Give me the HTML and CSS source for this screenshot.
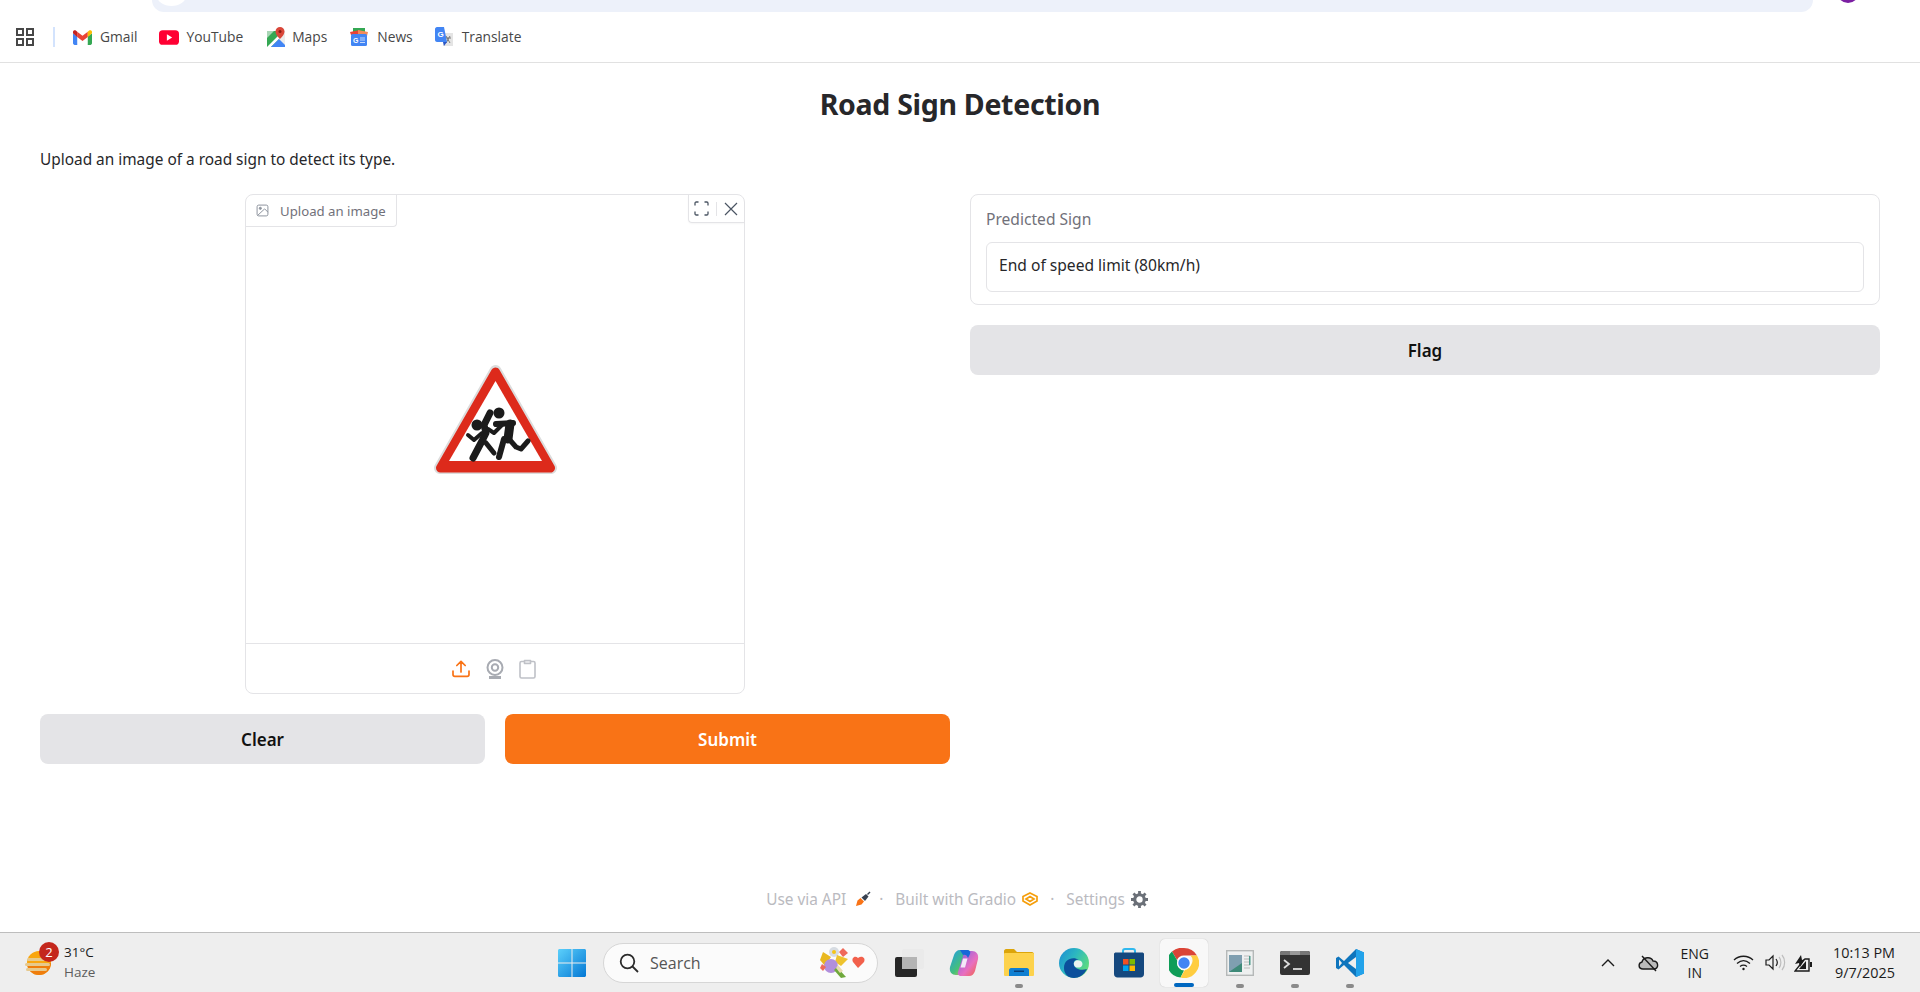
FILE: index.html
```html
<!DOCTYPE html>
<html lang="en">
<head>
<meta charset="utf-8">
<title>Road Sign Detection</title>
<link rel="stylesheet" href="styles.css">
</head>
<body>
<div class="screen">
  <div class="chrome-top">
    <div class="omnibox"><span class="omni-notch"></span></div>
    <span class="avatar"></span>
  </div>
  <nav class="bookmarks">
    <svg class="apps" width="18" height="18" viewBox="0 0 18 18"><g fill="none" stroke="#474747" stroke-width="2"><rect x="1" y="1" width="6" height="6"/><rect x="11" y="1" width="6" height="6"/><rect x="1" y="11" width="6" height="6"/><rect x="11" y="11" width="6" height="6"/></g></svg>
    <span class="bm-divider"></span>
    <a class="bm bm-gmail"><svg width="19" height="15" viewBox="0 0 18 14"><path d="M0 3v9.500C0 13.300.7 14 1.500 14H4V6z" fill="#4285f4"/><path d="M14 6v8h2.500c.8 0 1.500-.7 1.500-1.500V3z" fill="#34a853"/><path d="M4 6.500V1.500L9 5.300l5-3.800v5L9 10.300z" fill="#ea4335"/><path d="M0 3V1.700C0 .3 1.600-.4 2.700.4L4 1.500v5z" fill="#c5221f"/><path d="M14 1.500 15.300.4C16.400-.4 18 .3 18 1.700V3l-4 3.500z" fill="#fbbc04"/></svg><span>Gmail</span></a>
    <a class="bm bm-yt"><svg width="20" height="15" viewBox="0 0 19 14"><rect width="19" height="14" rx="3.500" fill="#ff0033"/><path d="M7.500 4v6l5-3z" fill="#fff"/></svg><span>YouTube</span></a>
    <a class="bm bm-maps"><svg width="18" height="20" viewBox="0 0 18 20"><rect y="4" width="12" height="16" fill="#34a853"/><path d="M0 4h7L0 11z" fill="#a8d5b5"/><path d="M12 4h6v16h-6z" fill="#ececec"/><path d="M0 20 12 8v4l-8 8z" fill="#fff"/><path d="M4 20 12 12l6 6v2z" fill="#4285f4"/><path d="M13 0a4.500 4.500 0 0 0-4.500 4.500C8.500 8 13 12 13 12s4.500-4 4.500-7.500A4.500 4.500 0 0 0 13 0z" fill="#d9473a"/><circle cx="13" cy="4.500" r="1.500" fill="#8a1c14"/></svg><span>Maps</span></a>
    <a class="bm bm-news"><svg width="18" height="18" viewBox="0 0 18 18"><path d="M3 0h12v5H3z" fill="#34a853"/><path d="M0 4l10-2 1 5H1z" fill="#ea4335"/><path d="M8 2l10 2-1 4H8z" fill="#f28b5a"/><rect x="1" y="6" width="16" height="12" rx="1.500" fill="#4285f4"/><text class="news-g" x="3" y="14.500">G</text><path d="M10 10h5M10 12h5M10 14.500h5" stroke="#c5d9fb" stroke-width="1.200"/></svg><span>News</span></a>
    <a class="bm bm-translate"><svg width="18" height="20" viewBox="0 0 18 20"><path d="M8 6h10v13H8z" fill="#e4e4e4"/><path d="M11 9l4 7M15 9l-4 7M10 11h6" stroke="#777" stroke-width="1" fill="none"/><path d="M2 0h7l3 15H2c-1 0-2-1-2-2V2C0 1 1 0 2 0z" fill="#4285f4"/><path d="M8 15h4l-3 4z" fill="#2a56c6"/><text class="tr-g" x="2.500" y="10">G</text></svg><span>Translate</span></a>
  </nav>

  <main class="app">
    <h1 class="title">Road Sign Detection</h1>
    <p class="lead">Upload an image of a road sign to detect its type.</p>
    <div class="columns">
      <section class="col">
        <div class="image-slot">
          <div class="image-box">
            <div class="image-head">
              <div class="image-label">
                <svg width="13" height="13" viewBox="0 0 24 24" fill="none" stroke="#8c929c" stroke-width="1.800"><rect x="2" y="2" width="20" height="20" rx="3"/><circle cx="8" cy="8" r="2" fill="#8c929c"/><path d="M22 15l-6-6L3 21"/></svg>
                <span>Upload an image</span>
              </div>
              <div class="image-actions">
                <svg width="15" height="15" viewBox="0 0 15 15" fill="none" stroke="#4b5563" stroke-width="1.300"><path d="M1 4.500V2.200C1 1.500 1.500 1 2.200 1h2.300M10.500 1h2.300c.7 0 1.200.5 1.200 1.200v2.300M14 10.500v2.300c0 .7-.5 1.200-1.200 1.200h-2.300M4.500 14H2.200C1.500 14 1 13.500 1 12.800v-2.300"/></svg>
                <span class="action-sep"></span>
                <svg width="14" height="14" viewBox="0 0 14 14" fill="none" stroke="#4b5563" stroke-width="1.200"><path d="M1 1l12 12M13 1 1 13"/></svg>
              </div>
            </div>
            <div class="image-stage">
              <svg width="127" height="114" viewBox="0 0 127 114">
                <path d="M63.500 8 119 105H8z" fill="#fff" stroke="#dcdcdc" stroke-width="12" stroke-linejoin="round"/>
                <path d="M63.500 9 118.500 105H8.500z" fill="#dd2a1b" stroke="#dd2a1b" stroke-width="9" stroke-linejoin="round"/>
                <path d="M63.500 18 110 98H17z" fill="#fff"/>
                <g fill="#1b1b1b"><circle cx="67" cy="50" r="5.500"/><circle cx="45" cy="62" r="5.500"/></g>
                <g fill="none" stroke="#1b1b1b" stroke-linecap="round" stroke-linejoin="round">
                  <path d="M64 61 81 60" stroke-width="6"/>
                  <path d="M78 61 76 76" stroke-width="9"/>
                  <path d="M77 76 84 84 89 86 96 78" stroke-width="5"/>
                  <path d="M72 76 67 94" stroke-width="6"/>
                  <path d="M56 66 62 70 70 62" stroke-width="4"/>
                  <path d="M58 50 52 62 54 70 50 78 41 95" stroke-width="7"/>
                  <path d="M54 80 62 90" stroke-width="5"/>
                  <path d="M36 72 42 77 50 70" stroke-width="4"/>
                </g>
              </svg>
            </div>
            <div class="image-sources">
              <svg width="20" height="20" viewBox="0 0 20 20" fill="none" stroke="#f97316" stroke-width="1.700" stroke-linecap="round" stroke-linejoin="round"><path d="M2 12v3.500c0 1 .8 1.800 1.800 1.800h12.400c1 0 1.800-.8 1.800-1.800V12M10 13V2.500M5.800 6.500 10 2.300l4.200 4.200"/></svg>
              <svg width="18" height="20" viewBox="0 0 18 20" fill="none" stroke="#a8abb2" stroke-width="2"><circle cx="9" cy="8.500" r="7.500"/><circle cx="9" cy="8.500" r="3.200"/><path d="M3 18.500h12" stroke-width="3"/></svg>
              <svg width="17" height="20" viewBox="0 0 17 20" fill="none" stroke="#bfc1c7" stroke-width="1.600" stroke-linejoin="round"><rect x="1" y="2.500" width="15" height="16.500" rx="1.500"/><path d="M5.500 4.500V1.500h6v3z" fill="#eeeef0"/></svg>
            </div>
          </div>
        </div>
        <div class="btn-row">
          <button class="btn btn-grey">Clear</button>
          <button class="btn btn-primary">Submit</button>
        </div>
      </section>
      <section class="col">
        <div class="output">
          <label class="output-label">Predicted Sign</label>
          <div class="output-value">End of speed limit (80km/h)</div>
        </div>
        <button class="btn btn-grey">Flag</button>
      </section>
    </div>
    <footer class="foot">
      <a>Use via API</a>
      <svg class="foot-ic-api" width="16" height="16" viewBox="0 0 16 16"><path d="M1 15l1.500-5.500L5.500 7 9 10.500 6.500 13.500z" fill="#f97316"/><path d="M6.500 6.500 11 3l2.500 2.500L10 10z" fill="#374151"/><path d="M12.500 3.500 15 1" stroke="#374151" stroke-width="1.500"/></svg>
      <span class="foot-dot foot-dot-first">·</span>
      <a>Built with Gradio</a>
      <svg class="foot-ic-gr" width="16" height="14" viewBox="0 0 16 14" fill="none" stroke="#f59e0b" stroke-width="1.700"><path d="M8 1 15 4.500V9L8 13 1 9V4.500z"/><path d="M8 4.500 12 7 8 9.500 4 7z"/></svg>
      <span class="foot-dot">·</span>
      <a>Settings</a>
      <svg class="foot-ic-set" width="17" height="17" viewBox="0 0 16 16"><circle cx="8" cy="8" r="4.500" fill="none" stroke="#6b7078" stroke-width="3"/><path d="M8 0v3M8 13v3M0 8h3M13 8h3M2.300 2.300l2.200 2.200M11.500 11.500l2.200 2.200M13.700 2.300l-2.200 2.200M4.500 11.500l-2.200 2.200" stroke="#6b7078" stroke-width="2.600"/></svg>
    </footer>
  </main>

  <div class="taskbar">
    <div class="tb-weather">
      <div class="weather-ic">
        <svg width="28" height="28" viewBox="0 0 28 28"><circle cx="14" cy="14" r="12" fill="#f9a60f"/><path d="M2 14a12 12 0 0 0 24 0z" fill="#ef7d0c"/><g fill="#e6c98d"><rect x="2" y="9" width="23" height="3" rx="1.500"/><rect x="0" y="14" width="25" height="3" rx="1.500"/><rect x="1" y="19" width="21" height="3" rx="1.500"/></g></svg>
        <span class="badge">2</span>
      </div>
      <div class="weather-text"><span class="w-temp">31°C</span><span class="w-desc">Haze</span></div>
    </div>
    <div class="tb-center">
      <div class="tb-btn tb-win">
        <svg width="30" height="30" viewBox="0 0 30 30"><defs><linearGradient id="w" x1="0" y1="0" x2="1" y2="1"><stop offset="0" stop-color="#5cd0fb"/><stop offset="1" stop-color="#0377d4"/></linearGradient></defs><path d="M1 2.500C1 1.700 1.700 1 2.500 1h12v13.500H1zM15.500 1h12c.8 0 1.500.7 1.500 1.500v12H15.500zM1 15.500h13.500V29h-12C1.700 29 1 28.300 1 27.500zM15.500 15.500H29v12c0 .8-.7 1.500-1.500 1.500h-12z" fill="url(#w)"/></svg>
      </div>
      <div class="searchbox">
        <svg width="20" height="20" viewBox="0 0 20 20" fill="none" stroke="#2b2b2b" stroke-width="1.800"><circle cx="8.500" cy="8.500" r="6.800"/><path d="M13.500 13.500 19 19"/></svg>
        <span class="search-text">Search</span>
        <svg class="bouquet" width="50" height="32" viewBox="0 0 50 32"><circle cx="16" cy="5" r="5" fill="#d7dce2"/><circle cx="16" cy="5" r="2" fill="#f5c518"/><path d="M5 5l8 5-6 9-5-6z" fill="#e9b820"/><path d="M25 1l5 5-5 4-4-5z" fill="#ef6a5a"/><path d="M19 8l11 4-7 7-6-4z" fill="#eec32e"/><circle cx="13" cy="19" r="7" fill="#b18fdc"/><path d="M4 17l4 3-3 4-3-3z" fill="#ef6a5a"/><path d="M19 20l9 10-5 1-7-8z" fill="#6fa83c"/><path d="M20 18l5 6-3 2-4-5z" fill="#e8dcb0"/><path d="M40 11c-3-3-7 0-5 4l5 6 6-6c2-4-2-7-6-4z" fill="#f2604c"/></svg>
      </div>
      <div class="tb-btn tb-taskview"><svg width="30" height="30" viewBox="0 0 30 30"><rect x="1" y="9" width="22" height="20" rx="2" fill="#262626"/><rect x="8" y="1" width="22" height="20" rx="2" fill="#e9e9e9" fill-opacity=".85"/><rect x="8" y="9" width="15" height="12" fill="#b4b4b4"/></svg></div>
      <div class="tb-btn tb-copilot"><svg width="30" height="30" viewBox="0 0 30 30"><defs><linearGradient id="c1" x1="0" y1="0" x2="1" y2="1"><stop offset="0" stop-color="#1e9be8"/><stop offset=".55" stop-color="#46c07a"/><stop offset="1" stop-color="#f6c53d"/></linearGradient><linearGradient id="c2" x1="0" y1="0" x2="1" y2="1"><stop offset="0" stop-color="#7a5ee8"/><stop offset=".6" stop-color="#e86fc0"/><stop offset="1" stop-color="#f2633f"/></linearGradient></defs><path d="M11 2C8 2 6 4 5 7L1 19C0 24 3 27 7 27H10C13 27 15 25 16 22L21 6C22 4 20 2 18 2z" fill="url(#c1)"/><path d="M20 28C23 28 25 26 26 23L29 11C30 6 27 3 23 3H20C17 3 15 5 14 8L9 24C8 26 10 28 12 28z" fill="url(#c2)"/><path d="M11 2h7c2 0 4 1 3 4l-2 4c-1-3-3-4-5-3z" fill="#1768d8"/><path d="M14 10.500h4.500L16 19.500h-4.500z" fill="#f3e9f7"/></svg></div>
      <div class="tb-btn tb-running"><svg width="30" height="27" viewBox="0 0 30 27"><path d="M0 2c0-1 1-2 2-2h8l3 3h15c1 0 2 1 2 2v3H0z" fill="#dca50a"/><rect y="4" width="30" height="23" rx="1" fill="#fdd24c"/><path d="M5 27v-6c0-1 1-2 2-2h16c1 0 2 1 2 2v6z" fill="#0f7fd2"/><rect x="10" y="21.500" width="10" height="1.500" fill="#0a3f78"/></svg></div>
      <div class="tb-btn tb-edge"><svg width="30" height="30" viewBox="0 0 30 30"><defs><linearGradient id="e" x1="0" y1="0" x2="1" y2=".6"><stop offset="0" stop-color="#1a8ad6"/><stop offset=".5" stop-color="#2cb8c0"/><stop offset="1" stop-color="#5fdc7c"/></linearGradient></defs><circle cx="15" cy="15" r="15" fill="url(#e)"/><path d="M5 20C5 11 14 8 20 12 16 11 14 14 15 17 16 21 22 23 28 21 25 27 20 30 15 30 9 30 5 26 5 20z" fill="#0b4f9c"/><path d="M15 17C14 13 18 11 22 13 24 15 24 17 22 19 19 20 16 20 15 17z" fill="#e8f4f0"/></svg></div>
      <div class="tb-btn tb-store"><svg width="30" height="30" viewBox="0 0 30 30"><path d="M9 5V3c0-1 1-2 2-2h8c1 0 2 1 2 2v2" fill="none" stroke="#2fb8ee" stroke-width="2"/><path d="M0 6c0-1 1-1.500 2-1.500h26c1 0 2 .5 2 1.500v20c0 2-1.500 3.500-3.500 3.500h-23C1.500 29.500 0 28 0 26z" fill="#15487e"/><rect x="9" y="11" width="5.500" height="5.500" fill="#f25022"/><rect x="15.500" y="11" width="5.500" height="5.500" fill="#7fba00"/><rect x="9" y="17.500" width="5.500" height="5.500" fill="#00a4ef"/><rect x="15.500" y="17.500" width="5.500" height="5.500" fill="#ffb900"/></svg></div>
      <div class="tb-btn tb-active"><svg width="30" height="30" viewBox="0 0 30 30"><path d="M15 0a15 15 0 0 1 13 7.500H15A7.500 7.500 0 0 0 8 12L3 3.500A15 15 0 0 1 15 0z" fill="#db4437"/><path d="M3 3.500 8.500 13A7.500 7.500 0 0 0 15 22.500L11.500 29.600A15 15 0 0 1 3 3.500z" fill="#0f9d58"/><path d="M28 7.500A15 15 0 0 1 11.500 29.600L17 20a7.500 7.500 0 0 0 4.500-12.500z" fill="#ffcd40"/><circle cx="15" cy="15" r="7" fill="#fff"/><circle cx="15" cy="15" r="5.700" fill="#4285f4"/></svg></div>
      <div class="tb-btn tb-running"><svg width="28" height="26" viewBox="0 0 28 26"><rect x=".7" y=".7" width="26.600" height="24.600" fill="#eef0f0" stroke="#b5b8b8" stroke-width="1.400"/><rect x="3" y="5" width="13" height="17" fill="#3e8a78"/><path d="M3 5h13v8L3 22z" fill="#7f9fb0"/><path d="M18 6h6M18 9h6M18 12h6M18 15h6M18 18h6" stroke="#bcbcbc"/><rect x="23" y="6" width="1.500" height="9" fill="#4c9a8a"/></svg></div>
      <div class="tb-btn tb-running"><svg width="30" height="24" viewBox="0 0 30 24"><rect width="30" height="24" rx="2" fill="#333"/><path d="M0 2c0-1 1-2 2-2h26c1 0 2 1 2 2v2H0z" fill="#777"/><path d="M10 0h10v4H10z" fill="#999"/><path d="M4 9l5 4-5 4" fill="none" stroke="#ddd" stroke-width="1.800"/><path d="M13 18h9" stroke="#ddd" stroke-width="1.800"/></svg></div>
      <div class="tb-btn tb-running"><svg width="30" height="30" viewBox="0 0 30 30"><path d="M21 1 9 13 3.500 8.500 1 10v10l2.500 1.500L9 17l12 12 8-3.500V4.500z" fill="#0e75bd"/><path d="M21 1l8 3.500v21L21 29z" fill="#22a2ea"/><path d="M21 9l-8 6 8 6z" fill="#eeeeee"/><path d="M4 11.500 7 15l-3 3.500z" fill="#eeeeee"/></svg></div>
    </div>
    <div class="tray">
      <svg class="tr-chev" width="14" height="9" viewBox="0 0 14 9" fill="none" stroke="#1b1b1b" stroke-width="1.400"><path d="M1 8l6-6 6 6"/></svg>
      <svg class="tr-cloud" width="22" height="18" viewBox="0 0 22 18" fill="none" stroke="#1b1b1b" stroke-width="1.400"><path d="M5 15c-5 0-5-6-1-7 1-5 9-6 11-1 6 0 6 8 1 8z" fill="#bbb"/><path d="M4 2l14 15"/></svg>
      <div class="tr-lang"><span>ENG</span><span>IN</span></div>
      <svg class="tr-wifi" width="21" height="17" viewBox="0 0 21 17" fill="none" stroke="#1b1b1b" stroke-width="1.300"><path d="M1 6c5-5 14-5 19 0M4 9.500c4-3.500 9-3.500 13 0M7 12.500c2-1.500 5-1.500 7 0"/><circle cx="10.500" cy="15" r="1.200" fill="#1b1b1b" stroke="none"/></svg>
      <svg class="tr-vol" width="21" height="17" viewBox="0 0 21 17" fill="none" stroke="#1b1b1b" stroke-width="1.200"><path d="M1 6v5h3l4 4V2L4 6z"/><path d="M11 5c1.500 2 1.500 5 0 7" /><path d="M14 3c2.500 3 2.500 8 0 11M17 1c3.500 4 3.500 11 0 15" stroke="#bdbdbd"/></svg>
      <svg class="tr-bat" width="20" height="18" viewBox="0 0 20 18"><path d="M1 17h14V5h-4l-2 2z" fill="none" stroke="#1b1b1b" stroke-width="1.400"/><path d="M1 10 7 1l1 5 3-1-5 8-1-4z" fill="#1b1b1b"/><path d="M5 15l7-8v8z" fill="#1b1b1b"/><rect x="16" y="8" width="2" height="5" fill="#1b1b1b"/></svg>
      <div class="tr-clock"><span>10:13 PM</span><span>9/7/2025</span></div>
    </div>
  </div>
</div>
</body>
</html>
```

FILE: styles.css
```css
* { box-sizing: border-box; }
html, body { margin: 0; padding: 0; height: 100%; overflow: hidden; background: #fff; }
body { font-family: "Noto Sans", "Liberation Sans", sans-serif; color: #27272a; }
.screen { width: 1920px; height: 992px; display: flex; flex-direction: column; overflow: hidden; }

.chrome-top { height: 12px; flex: none; display: flex; background: #fff; padding-left: 152px; }
.omnibox { width: 1661px; height: 12px; background: #edf1fa; border-radius: 0 0 18px 18px; position: relative; overflow: hidden; }
.omni-notch { position: absolute; left: 5px; top: -14px; width: 29px; height: 20px; border-radius: 50%; background: #fff; }
.avatar { width: 22px; height: 22px; margin: -19px 0 0 24px; border-radius: 50%; background: #7b1fa2; }

.bookmarks { height: 51px; flex: none; display: flex; align-items: center; padding-left: 16px; border-bottom: 1px solid #e1e1e1; font-family: "Open Sans", sans-serif; font-size: 13.8px; color: #474747; }
.apps { flex: none; }
.bm-divider { width: 2px; height: 20px; background: #d3e3fd; margin: 0 18px 0 19px; }
.bm { display: flex; align-items: center; gap: 8px; }
.bm span { margin-top: -2px; }
.bm-gmail { margin-right: 22px; }
.bm-yt { margin-right: 24px; gap: 7px; }
.bm-maps { margin-right: 23px; gap: 7px; }
.bm-news { margin-right: 22px; gap: 9px; }
.bm-translate { gap: 9px; }
.news-g { font: bold 7px "Liberation Sans", sans-serif; fill: #fff; }
.tr-g { font: bold 8px "Liberation Sans", sans-serif; fill: #fff; }

.app { flex: 1; display: flex; flex-direction: column; padding: 0 40px; min-height: 0; }
.title { margin: 23px 0 0; height: 36px; line-height: 36px; text-align: center; font-size: 28.5px; font-weight: 700; color: #27272a; letter-spacing: -0.3px; }
.lead { margin: 26px 0 0; height: 24px; line-height: 24px; font-size: 15.4px; color: #27272a; }
.columns { margin-top: 22px; display: grid; grid-template-columns: 910px 910px; gap: 20px; }
.col { display: flex; flex-direction: column; gap: 20px; }

.image-slot { display: flex; justify-content: center; }
.image-box { width: 500px; height: 500px; border: 1px solid #e4e4e7; border-radius: 8px; display: flex; flex-direction: column; position: relative; background: #fff; }
.image-head { height: 32px; flex: none; display: flex; justify-content: space-between; }
.image-label { display: flex; align-items: center; gap: 11px; height: 32px; padding: 0 10px; width: 151px; border: solid #e4e4e7; border-width: 0 1px 1px 0; border-radius: 8px 0 4px 0; font-size: 13.2px; color: #71717a; white-space: nowrap; }
.image-actions { display: flex; align-items: center; gap: 7px; height: 28px; padding: 0 6px 0 5px; border: solid #e4e4e7; border-width: 0 0 1px 1px; border-radius: 0 8px 0 4px; box-shadow: 0 1px 2px rgba(0,0,0,.04); }
.action-sep { width: 1px; height: 14px; background: #e4e4e7; }
.image-stage { flex: 1; display: flex; align-items: center; justify-content: center; padding-bottom: 30px; }
.image-sources { height: 50px; flex: none; border-top: 1px solid #e4e4e7; display: flex; align-items: center; justify-content: center; gap: 15px; padding-right: 3px; }

.btn-row { display: grid; grid-template-columns: 1fr 1fr; gap: 20px; }
.btn { height: 50px; border: none; border-radius: 8px; font-family: inherit; font-size: 17px; font-weight: 600; }
.btn-grey { background: #e4e4e7; color: #111; }
.btn-primary { background: #f97316; color: #fff; }

.output { height: 111px; padding: 15px; border: 1px solid #e4e4e7; border-radius: 8px; background: #fff; }
.output-label { display: block; height: 32px; line-height: 18px; font-size: 15.6px; color: #71717a; }
.output-value { height: 50px; line-height: 45px; padding: 0 12px 0 10px; border: 1px solid #e4e4e7; border-radius: 6px; font-size: 15.6px; color: #27272a; text-indent: 2px; }

.foot { margin-top: auto; height: 24px; margin-bottom: 21px; padding-right: 6px; display: flex; align-items: center; justify-content: center; font-size: 15.4px; color: #babac0; white-space: nowrap; }
.foot-ic-api { margin-left: 9px; }
.foot-ic-gr { margin-left: 6px; }
.foot-ic-set { margin-left: 6px; }
.foot-dot { margin: 0 12px; }
.foot-dot-first { margin-left: 8px; }

.taskbar { height: 60px; flex: none; display: flex; align-items: center; background: #eeeeee; border-top: 1px solid #bdbdbd; font-family: "Open Sans", sans-serif; }
.tb-weather { width: 544px; flex: none; display: flex; align-items: center; padding-left: 25px; gap: 11px; }
.weather-ic { position: relative; width: 28px; height: 28px; }
.badge { position: absolute; left: 14px; top: -7px; width: 20px; height: 20px; border-radius: 50%; background: #c4271c; color: #fff; font-size: 13px; line-height: 20px; text-align: center; }
.weather-text { display: flex; flex-direction: column; font-size: 13.5px; line-height: 20px; color: #1b1b1b; margin-top: -2px; }
.w-desc { color: #5d5d5d; }
.tb-center { display: flex; align-items: center; }
.tb-btn { width: 55px; height: 48px; flex: none; display: flex; align-items: center; justify-content: center; position: relative; }
.tb-win { width: 56px; }
.tb-running::after, .tb-active::after { content: ""; position: absolute; bottom: -1px; left: 50%; width: 8px; height: 4px; margin-left: -4px; border-radius: 2px; background: #8a8a8a; }
.tb-active { width: 48px; margin: 0 4px; background: #f8f8f8; border-radius: 5px; box-shadow: 0 0 1px rgba(0,0,0,.25); }
.tb-active::after { width: 20px; margin-left: -10px; background: #0067c0; bottom: 0; }
.searchbox { width: 275px; height: 40px; margin: 0 3px; padding: 0 0 0 15px; display: flex; align-items: center; gap: 11px; background: #fbfbfb; border: 1px solid #d6d6d6; border-radius: 20px; font-size: 16px; color: #555; }
.search-text { flex: 1; }
.bouquet { margin-right: 9px; }
.tray { margin-left: auto; display: flex; align-items: center; padding-right: 25px; color: #1b1b1b; font-size: 14px; }
.tr-lang { display: flex; flex-direction: column; align-items: center; line-height: 19px; margin: 0 24px 0 20px; }
.tr-chev { margin-right: 23px; }
.tr-wifi { margin-right: 11px; }
.tr-vol { margin-right: 8px; }
.tr-clock { display: flex; flex-direction: column; align-items: flex-end; line-height: 20px; margin-left: 19px; font-size: 14.4px; }
```
